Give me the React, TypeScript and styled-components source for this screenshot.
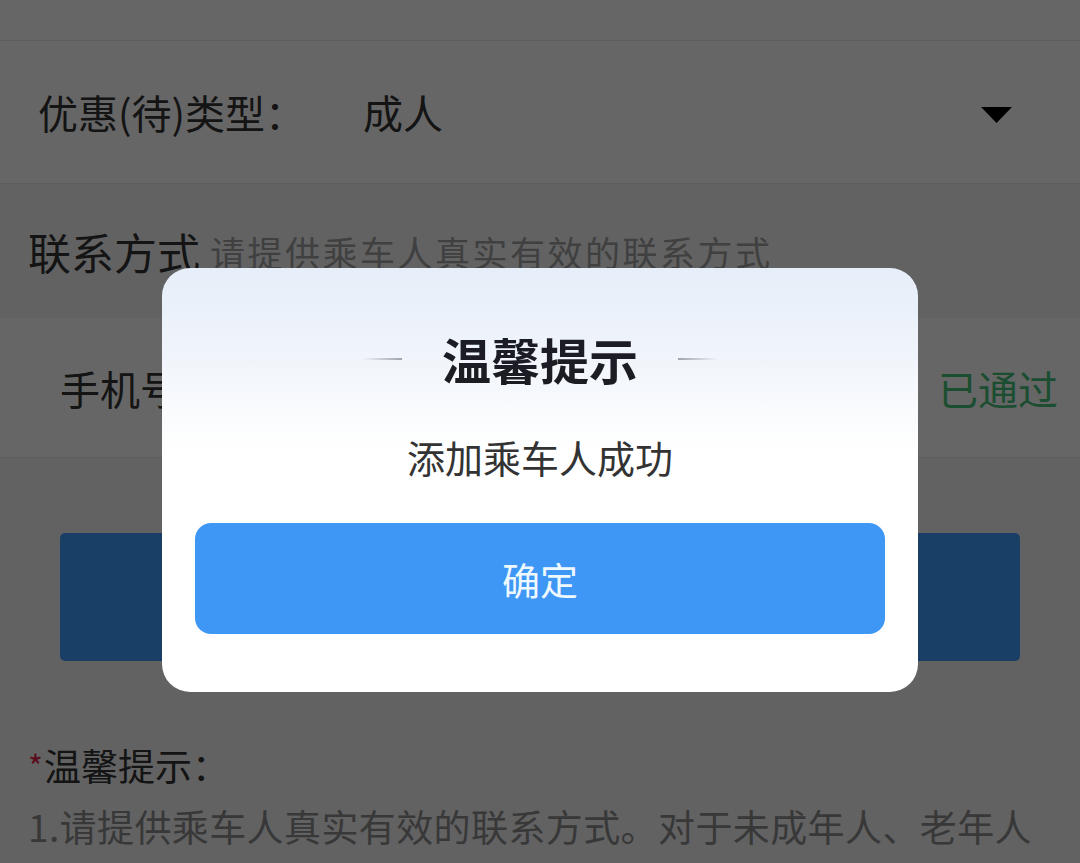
import styled, {createGlobalStyle} from "styled-components";

const GlobalStyle = createGlobalStyle`
  html, body {
    margin: 0;
    padding: 0;
    background: #f4f5f7;
  }
  body {
    font-family: "Noto Sans CJK SC", "Noto Sans", sans-serif;
    overflow: hidden;
  }
`;

const Page = styled.div`
  width: 1080px;
  height: 863px;
  display: flex;
  flex-direction: column;
  background: #f4f5f7;
  overflow: hidden;
`;

const Row = styled.div<{ $height: number; $pad?: number }>`
  height: ${p => p.$height}px;
  flex-shrink: 0;
  display: flex;
  align-items: center;
  padding: 0 ${p => p.$pad ?? 38}px;
  background: #ffffff;
  border-bottom: 1px solid #ececec;
  box-sizing: border-box;
`;

const Label = styled.span`
  font-size: 40px;
  color: #333333;
`;

const Value = styled.span`
  font-size: 40px;
  color: #333333;
  margin-left: 58px;
  flex: 1;
`;

const Caret = styled.svg`
  width: 31px;
  height: 17px;
  margin-right: 30px;
  margin-top: 6px;
`;

const SectionHead = styled.div`
  height: 134px;
  flex-shrink: 0;
  display: flex;
  align-items: center;
  padding: 0 28px;
  white-space: nowrap;
`;

const SectionTitle = styled.span`
  font-size: 43px;
  color: #333333;
`;

const SectionHint = styled.span`
  font-size: 35px;
  color: #a0a0a0;
  margin-left: 10px;
  letter-spacing: 2.5px;
`;

const Phone = styled.span`
  font-size: 40px;
  color: #333333;
  flex: 1;
`;

const Passed = styled.span`
  font-size: 40px;
  color: #45c07a;
  margin-right: -38px;
`;

const SubmitBar = styled.div`
  margin: 75px 60px 0;
  height: 128px;
  flex-shrink: 0;
  background: #419eff;
  border-radius: 5px;
`;

const Notes = styled.div`
  padding: 80px 28px 0;
  display: flex;
  flex-direction: column;
`;

const NotesTitle = styled.div`
  font-size: 37px;
  color: #333333;
  line-height: 48px;
  display: flex;
  align-items: center;
`;

const Star = styled.span`
  color: #e0244a;
  font-size: 32px;
  margin-right: 1px;
`;

const NoteLine = styled.div`
  font-size: 37px;
  color: #8d8d8d;
  line-height: 62px;
  margin-top: 6px;
  letter-spacing: 0.4px;
  white-space: nowrap;
`;

const Overlay = styled.div`
  position: fixed;
  inset: 0;
  background: rgba(0, 0, 0, 0.6);
`;

const Dialog = styled.div`
  position: fixed;
  left: 162px;
  top: 268px;
  width: 756px;
  box-sizing: border-box;
  border-radius: 28px;
  background: linear-gradient(180deg, #e6eef9 0%, #f1f5fb 22%, #fcfdfe 38%, #ffffff 44%, #ffffff 100%);
  padding: 56px 33px 58px;
  display: flex;
  flex-direction: column;
  align-items: center;
`;

const TitleRow = styled.div`
  display: flex;
  align-items: center;
  gap: 40px;
`;

const Dash = styled.span<{ $flip?: boolean }>`
  width: 40px;
  height: 2px;
  background: linear-gradient(${p => (p.$flip ? "270deg" : "90deg")}, rgba(160, 166, 176, 0) 0%, #9ea4ad 100%);
`;

const Title = styled.div`
  font-size: 49px;
  font-weight: 700;
  color: #1b1c24;
  line-height: 70px;
`;

const Message = styled.div`
  font-size: 38px;
  color: #333333;
  line-height: 54px;
  margin-top: 36px;
`;

const ConfirmButton = styled.button`
  margin-top: 39px;
  width: 100%;
  height: 111px;
  border: none;
  border-radius: 16px;
  background: #3f97f5;
  color: #eef8ff;
  font-family: inherit;
  font-size: 38px;
`;

export default function App() {
  return (
    <>
      <GlobalStyle/>
      <Page>
        <Row $height={41}/>
        <Row $height={143}>
          <Label>优惠(待)类型：</Label>
          <Value>成人</Value>
          <Caret viewBox="0 0 31 17">
            <polygon points="0,0 31,0 15.5,16" fill="#000"/>
          </Caret>
        </Row>
        <SectionHead>
          <SectionTitle>联系方式</SectionTitle>
          <SectionHint>请提供乘车人真实有效的联系方式</SectionHint>
        </SectionHead>
        <Row $height={140} $pad={60}>
          <Phone>手机号</Phone>
          <Passed>已通过</Passed>
        </Row>
        <SubmitBar/>
        <Notes>
          <NotesTitle><Star>*</Star>温馨提示：</NotesTitle>
          <NoteLine>1.请提供乘车人真实有效的联系方式。对于未成年人、老年人</NoteLine>
          <NoteLine>等重点旅客，以及无手机的旅客，可提供监护人或代办人的联系方式</NoteLine>
        </Notes>
      </Page>
      <Overlay/>
      <Dialog>
        <TitleRow>
          <Dash/>
          <Title>温馨提示</Title>
          <Dash $flip/>
        </TitleRow>
        <Message>添加乘车人成功</Message>
        <ConfirmButton>确定</ConfirmButton>
      </Dialog>
    </>
  );
}
